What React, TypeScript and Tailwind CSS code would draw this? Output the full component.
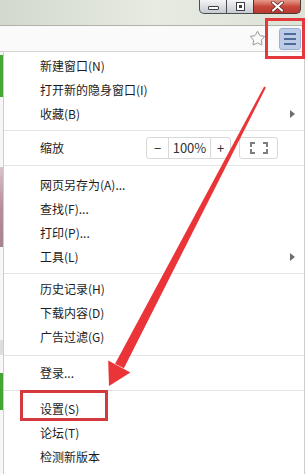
import { Star } from "lucide-react"

// Chrome-style (360/Windows 7) main menu with red annotation marks

function WindowButtons() {
  return (
    <div className="flex h-[25px] justify-end bg-gradient-to-r from-[#d3d9cc] via-[#e7ebe2] to-[#dde2d6] pr-[4px]">
      <div className="flex h-[14px]">
        <div className="flex w-[28px] items-center justify-center rounded-bl-[5px] border border-t-0 border-[#4b4f52] bg-gradient-to-b from-[#f3f5f6] to-[#c5cbd0]">
          <div className="mt-[2px] h-[4px] w-[11px] rounded-[1px] border border-[#3c4045] bg-white" />
        </div>
        <div className="flex w-[26px] items-center justify-center border-b border-[#4b4f52] bg-gradient-to-b from-[#f3f5f6] to-[#c5cbd0]">
          <div className="relative h-[9px] w-[9px] border border-[#3c4045] bg-white">
            <div className="absolute left-[2px] top-[2px] h-[3px] w-[3px] bg-[#3c4045]" />
          </div>
        </div>
        <div className="flex w-[48px] items-center justify-center rounded-br-[5px] border border-t-0 border-[#4b3a36] bg-gradient-to-b from-[#e69a8c] via-[#c9483c] to-[#b8392f]">
          <svg width="13" height="11" viewBox="0 0 13 11">
            <path d="M2 1.5 L11 9.5 M11 1.5 L2 9.5" stroke="#5a1e18" strokeWidth="3.6" strokeLinecap="round" />
            <path d="M2 1.5 L11 9.5 M11 1.5 L2 9.5" stroke="#ffffff" strokeWidth="2.2" strokeLinecap="round" />
          </svg>
        </div>
      </div>
    </div>
  )
}

function Toolbar() {
  return (
    <div className="flex h-[27px] items-center justify-end gap-[13px] border-y border-t-[#aeb1ad] border-b-[#d3d3d3] bg-[#fafafa] pr-[4px]">
      <Star size={17} strokeWidth={1.3} color="#8a8a8a" />
      <div className="flex h-[22px] w-[22px] flex-col items-center justify-center gap-[3px] rounded-[3px] border border-[#98afd6] bg-[#bdcce6]">
        <div className="h-[2px] w-[12px] bg-[#4e6a9a]" />
        <div className="h-[2px] w-[12px] bg-[#4e6a9a]" />
        <div className="h-[2px] w-[12px] bg-[#4e6a9a]" />
      </div>
    </div>
  )
}

function Arrow() {
  return (
    <svg width="5" height="8" viewBox="0 0 5 8">
      <path d="M0 0 L5 4 L0 8 Z" fill="#6e6e6e" />
    </svg>
  )
}

function Item({ label, sub }: { label: string; sub?: boolean }) {
  return (
    <div className="flex h-6 items-center justify-between pl-[36px] pr-[9px] text-[12px] text-[#1c1c1c]">
      <span>{label}</span>
      {sub && <Arrow />}
    </div>
  )
}

function Sep({ cls }: { cls: string }) {
  return <div className={`h-px bg-[#e4e4e4] ${cls}`} />
}

function ZoomRow() {
  return (
    <div className="flex h-[26px] items-center pl-[36px] text-[12px] text-[#1c1c1c]">
      <span className="w-[106px]">缩放</span>
      <div className="flex h-[22px] w-[85px] rounded-[3px] border border-[#d8d8d8] text-[13px] text-[#333]">
        <div className="flex w-[21px] items-center justify-center">−</div>
        <div className="flex w-[43px] items-center justify-center border-x border-[#d8d8d8]">100%</div>
        <div className="flex flex-1 items-center justify-center">+</div>
      </div>
      <div className="ml-[8px] flex h-[22px] w-[39px] items-center justify-center rounded-[3px] border border-[#d8d8d8]">
        <svg width="18" height="12" viewBox="0 0 18 12" fill="none" stroke="#7d7d7d" strokeWidth="2">
          <path d="M1 5 V1 H5 M13 1 H17 V5 M17 7 V11 H13 M5 11 H1 V7" />
        </svg>
      </div>
    </div>
  )
}

function PageEdge() {
  return (
    <div className="flex w-[3px] flex-col">
      <div className="h-[3px] bg-[#f4f4f4]" />
      <div className="h-[42px] bg-[#45a835]" />
      <div className="h-[70px] bg-[#f6f6f6]" />
      <div className="h-[80px] bg-gradient-to-b from-[#d9c2c8] via-[#b58f9c] to-[#a4838f]" />
      <div className="h-[93px] bg-[#f7f7f7]" />
      <div className="h-[15px] bg-[#dedede]" />
      <div className="h-[18px] bg-[#f7f7f7]" />
      <div className="h-[37px] bg-[#43a632]" />
      <div className="flex-1 bg-[#f7f7f7]" />
    </div>
  )
}

function Menu() {
  return (
    <div className="flex-1 border-x border-[#cdcdcd] bg-white pt-[2px]">
      <Item label="新建窗口(N)" />
      <Item label="打开新的隐身窗口(I)" />
      <Item label="收藏(B)" sub />
      <Sep cls="mt-[4px] mb-[4px]" />
      <ZoomRow />
      <Sep cls="mt-[4px] mb-[7px]" />
      <Item label="网页另存为(A)..." />
      <Item label="查找(F)..." />
      <Item label="打印(P)..." />
      <Item label="工具(L)" sub />
      <Sep cls="mt-[4px] mb-[3px]" />
      <Item label="历史记录(H)" />
      <Item label="下载内容(D)" />
      <Item label="广告过滤(G)" />
      <Sep cls="mt-[6px] mb-[5px]" />
      <Item label="登录..." />
      <Sep cls="mt-[5px] mb-[6px]" />
      <Item label="设置(S)" />
      <Item label="论坛(T)" />
      <Item label="检测新版本" />
    </div>
  )
}

export default function App() {
  return (
    <div className="relative h-[474px] w-[305px] overflow-hidden bg-white font-[Noto_Sans_CJK_SC,Noto_Sans,sans-serif]">
      <WindowButtons />
      <Toolbar />
      <div className="flex h-[422px]">
        <PageEdge />
        <Menu />
      </div>

      {/* annotations */}
      <div className="absolute left-[265px] top-[18px] h-[41px] w-[40px] border-[3px] border-[#e3383c]" />
      <div className="absolute left-[20px] top-[390px] h-[31px] w-[88px] border-[3px] border-[#d4393d]" />
      <svg className="pointer-events-none absolute left-0 top-0" width="305" height="474" viewBox="0 0 305 474">
        <polygon points="265.9,87.5 264.1,86.5 115.1,363.7 123.9,368.3" fill="#ea3438" />
        <polygon points="109,386 108.2,360.6 130.4,372.4" fill="#ea3438" />
      </svg>
    </div>
  )
}
